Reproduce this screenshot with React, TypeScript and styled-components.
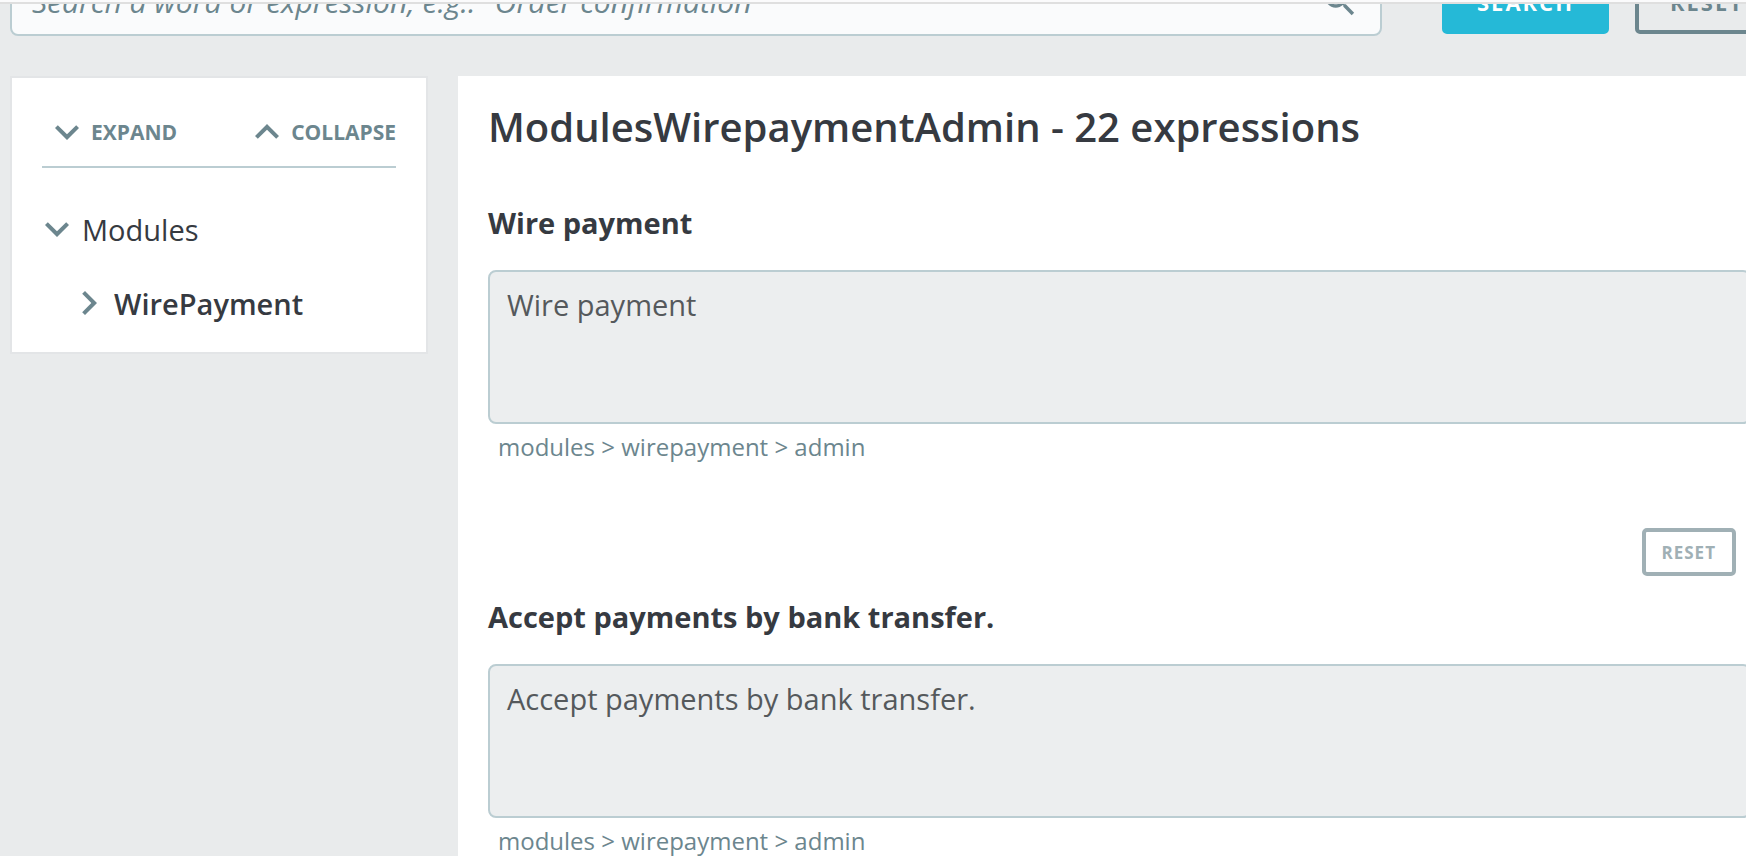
import React from 'react';
import styled, { createGlobalStyle } from 'styled-components';

const color = {
  page: '#e9ebec',
  ink: '#363a41',
  slate: '#6c868e',
  line: '#bbcdd2',
  primary: '#25b9d7',
};

const GlobalStyle = createGlobalStyle`
  *, *::before, *::after { box-sizing: border-box; }
  html, body { margin: 0; }
  body {
    background: ${color.page};
    color: ${color.ink};
    font-family: 'Open Sans', 'Noto Sans', sans-serif;
    font-size: 29px;
    overflow: hidden;
  }
  button, input, textarea { font-family: inherit; }
`;

const Header = styled.header`
  height: 4px;
  background: #fbfbfc;
  border-bottom: 2px solid #dfdfdf;
`;

/* The scrolled content is wider than the window and runs off its right edge. */
const Page = styled.div`
  width: calc(100% + 45px);
  padding: 0 10px;
`;

const SearchForm = styled.form`
  display: flex;
  align-items: flex-end;
  height: 32px;
  padding-right: 2px;
  overflow: hidden;
`;

const SearchBox = styled.label`
  flex: 1;
  display: flex;
  align-items: center;
  height: 70px;
  margin-right: 60px;
  padding: 0 20px;
  background: #fafbfc;
  border: 2px solid ${color.line};
  border-radius: 8px;
  color: ${color.slate};
`;

const SearchInput = styled.input`
  flex: 1;
  min-width: 0;
  height: 100%;
  padding: 0;
  border: 0;
  outline: 0;
  background: transparent;
  color: ${color.ink};
  font-size: 30px;
  &::placeholder {
    color: ${color.slate};
    font-style: italic;
    opacity: 1;
  }
`;

const SearchButton = styled.button<{ $outline?: boolean }>`
  flex: none;
  height: 64px;
  margin: 0 0 2px;
  padding: 0 31px;
  border: 4px solid ${p => (p.$outline ? color.slate : color.primary)};
  border-radius: 5px;
  background: ${p => (p.$outline ? 'transparent' : color.primary)};
  color: ${p => (p.$outline ? color.slate : '#fff')};
  font-size: 22px;
  font-weight: 700;
  letter-spacing: 2px;
  text-transform: uppercase;
  & + & { margin-left: 26px; }
`;

const Columns = styled.div`
  display: flex;
  align-items: flex-start;
  gap: 30px;
  margin-top: 40px;
`;

const Sidebar = styled.nav`
  flex: none;
  width: 418px;
  padding: 30px 30px 25px;
  background: #fff;
  border: 2px solid #e3e5e7;
`;

const TreeActions = styled.div`
  display: flex;
  justify-content: space-between;
  padding: 0 0 10px 13px;
  border-bottom: 2px solid ${color.line};
`;

const TreeAction = styled.button`
  display: flex;
  align-items: center;
  gap: 12px;
  height: 48px;
  padding: 0;
  border: 0;
  background: none;
  color: ${color.slate};
  font-size: 21px;
  font-weight: 700;
  text-transform: uppercase;
`;

const Tree = styled.ul`
  display: flex;
  flex-direction: column;
  gap: 26px;
  margin: 37px 0 0;
  padding: 0 0 0 3px;
  list-style: none;
`;

const Branch = styled(Tree)`
  margin: 26px 0 0;
  padding-left: 32px;
`;

const TreeNode = styled.button<{ $strong?: boolean }>`
  display: flex;
  align-items: center;
  gap: 13px;
  height: 48px;
  padding: 0;
  border: 0;
  background: none;
  color: ${color.ink};
  font-size: 29px;
  font-weight: ${p => (p.$strong ? 600 : 400)};
`;

const ChevronIcon = styled.svg`
  flex: none;
  width: 24px;
  height: 48px;
  fill: ${color.slate};
`;

const LensIcon = styled.svg`
  flex: none;
  width: 40px;
  height: 40px;
  fill: ${color.slate};
`;

const Panel = styled.main`
  flex: 1;
  min-width: 0;
  min-height: 100vh;
  padding: 23px 30px 0;
  background: #fff;
`;

const Title = styled.h1`
  margin: 0 0 48px;
  font-size: 40px;
  font-weight: 600;
  line-height: 56px;
`;

const Expression = styled.section`
  display: flex;
  flex-direction: column;
  margin-bottom: 21px;
`;

const Label = styled.label`
  margin-bottom: 27px;
  font-weight: 700;
  line-height: 40px;
`;

const Translation = styled.textarea`
  display: block;
  width: 100%;
  height: 154px;
  padding: 11px 17px;
  border: 2px solid ${color.line};
  border-radius: 8px;
  outline: 0;
  background: #eceeef;
  color: #55595c;
  font-size: 29px;
  line-height: 44px;
  resize: none;
`;

const Domain = styled.p`
  margin: 7px 0 65px;
  padding-left: 10px;
  color: ${color.slate};
  font-size: 24px;
  line-height: 32px;
`;

const ResetButton = styled.button`
  align-self: flex-end;
  height: 48px;
  margin: 0 15px 0 0;
  padding: 0 16px;
  border: 4px solid #a0b0b5;
  border-radius: 5px;
  background: #fff;
  color: #a0b0b5;
  font-size: 17px;
  font-weight: 700;
  letter-spacing: 1px;
  text-transform: uppercase;
`;

const chevrons = {
  down: 'M16.59 8.59L12 13.17 7.41 8.59 6 10l6 6 6-6z',
  up: 'M12 8l-6 6 1.41 1.41L12 10.83l4.59 4.58L18 14z',
  right: 'M10 6L8.59 7.41 13.17 12l-4.58 4.59L10 18l6-6z',
};

const Chevron = ({ to }: { to: keyof typeof chevrons }) => (
  <ChevronIcon viewBox="6 0 12 24" aria-hidden="true">
    <path d={chevrons[to]} />
  </ChevronIcon>
);

const expressions = ['Wire payment', 'Accept payments by bank transfer.'];

export default function App() {
  return (
    <>
      <GlobalStyle />
      <Header />
      <Page>
        <SearchForm onSubmit={e => e.preventDefault()}>
          <SearchBox>
            <SearchInput
              type="text"
              aria-label="Search"
              placeholder={'Search a word or expression, e.g.: "Order confirmation"'}
            />
            <LensIcon viewBox="0 0 24 24" aria-hidden="true">
              <path d="M15.5 14h-.79l-.28-.27C15.41 12.59 16 11.11 16 9.5 16 5.91 13.09 3 9.5 3S3 5.91 3 9.5 5.91 16 9.5 16c1.61 0 3.09-.59 4.23-1.57l.27.28v.79l5 4.99L20.49 19l-4.99-5zm-6 0C7.01 14 5 11.99 5 9.5S7.01 5 9.5 5 14 7.01 14 9.5 11.99 14 9.5 14z" />
            </LensIcon>
          </SearchBox>
          <SearchButton type="submit">Search</SearchButton>
          <SearchButton type="reset" $outline>Reset</SearchButton>
        </SearchForm>
        <Columns>
          <Sidebar aria-label="Translation domains">
            <TreeActions>
              <TreeAction type="button"><Chevron to="down" />Expand</TreeAction>
              <TreeAction type="button"><Chevron to="up" />Collapse</TreeAction>
            </TreeActions>
            <Tree>
              <li>
                <TreeNode type="button" aria-expanded="true"><Chevron to="down" />Modules</TreeNode>
                <Branch>
                  <li>
                    <TreeNode type="button" aria-expanded="false" $strong>
                      <Chevron to="right" />WirePayment
                    </TreeNode>
                  </li>
                </Branch>
              </li>
            </Tree>
          </Sidebar>
          <Panel>
            <Title>ModulesWirepaymentAdmin - 22 expressions</Title>
            {expressions.map((text, i) => (
              <Expression key={text}>
                <Label htmlFor={`expression-${i}`}>{text}</Label>
                <Translation id={`expression-${i}`} defaultValue={text} />
                <Domain>modules &gt; wirepayment &gt; admin</Domain>
                <ResetButton type="button">Reset</ResetButton>
              </Expression>
            ))}
          </Panel>
        </Columns>
      </Page>
    </>
  );
}
